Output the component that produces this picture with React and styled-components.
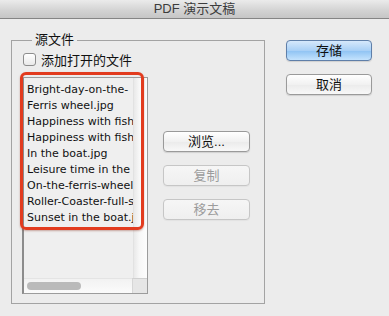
import React from "react";
import styled, { createGlobalStyle } from "styled-components";

const Global = createGlobalStyle`
  html, body { margin: 0; padding: 0; background: #ececec; }
  * { box-sizing: border-box; }
`;

const cjk = `"Liberation Sans", "Noto Sans CJK SC", sans-serif`;

const Window = styled.div`
  width: 389px;
  height: 316px;
  background: #ececec;
  font-family: ${cjk};
  overflow: hidden;
`;

const TitleBar = styled.div`
  height: 19px;
  border-bottom: 1px solid #858585;
  background: linear-gradient(#ebebeb, #d2d2d2 60%, #c6c6c6);
  display: flex;
  align-items: center;
  justify-content: center;
  font-size: 13px;
  color: #3c3c3c;
  line-height: 18px;
`;

const Body = styled.div`
  display: flex;
  padding-left: 11px;
  padding-top: 14px;
`;

const Group = styled.fieldset`
  width: 254px;
  margin: 0;
  border: 1px solid #a3a3a3;
  padding: 4px 0 9px 11px;
  min-width: 0;
`;

const Legend = styled.legend`
  margin-left: 9px;
  padding: 0 3px;
  font-size: 13px;
  line-height: 14px;
  color: #111;
`;

const CheckRow = styled.label`
  display: flex;
  align-items: center;
  height: 16px;
  font-size: 13px;
  color: #111;
  gap: 5px;
`;

const Check = styled.span`
  width: 13px;
  height: 13px;
  border: 1px solid #8d8d8d;
  border-radius: 3px;
  background: linear-gradient(#ffffff, #e9e9e9);
  box-shadow: inset 0 1px 0 #fff;
`;

const ListRow = styled.div`
  display: flex;
  margin-top: 10px;
  margin-left: -1px;
`;

const ListBox = styled.div`
  position: relative;
  width: 126px;
  height: 217px;
  border: 1px solid #9c9c9c;
  border-left: 2px solid #8c8c8c;
  background: #efefef;
  display: flex;
  flex-direction: column;
`;

const ListMain = styled.div`
  flex: 1;
  display: flex;
  min-height: 0;
`;

const Items = styled.div`
  flex: 1;
  overflow: hidden;
  padding: 4px 0 0 3px;
  font-family: "DejaVu Sans", "Liberation Sans", sans-serif;
  font-size: 11px;
  line-height: 16px;
  color: #111;
  white-space: nowrap;
`;

const VTrack = styled.div`
  width: 14px;
  background: linear-gradient(90deg, #e9e9e9, #f7f7f7 40%, #fdfdfd);
  border-left: 1px solid #e2e2e2;
`;

const HBar = styled.div`
  height: 15px;
  display: flex;
`;

const HTrack = styled.div`
  flex: 1;
  background: linear-gradient(#f2f2f2, #fbfbfb);
  border-top: 1px solid #e4e4e4;
  padding: 3px 0 0 3px;
`;

const Thumb = styled.div`
  width: 54px;
  height: 8px;
  border-radius: 4px;
  background: #bababa;
`;

const Corner = styled.div`
  width: 15px;
  background: #e6e6e6;
  border-top: 1px solid #d0d0d0;
  border-left: 1px solid #d6d6d6;
`;

const Highlight = styled.div`
  position: absolute;
  left: -4px;
  top: -6px;
  width: 124px;
  height: 158px;
  border: 3px solid #e23b1e;
  border-radius: 6px;
  box-shadow: 0 1px 2px rgba(120, 30, 10, 0.35);
  pointer-events: none;
`;

const SideButtons = styled.div`
  display: flex;
  flex-direction: column;
  gap: 13px;
  margin-left: 15px;
  margin-top: 54px;
`;

const RightButtons = styled.div`
  display: flex;
  flex-direction: column;
  gap: 13px;
  margin-left: 21px;
  margin-top: 7px;
`;

const Button = styled.button`
  width: ${(p) => p.$w}px;
  height: 21px;
  padding: 0;
  border-radius: 4px;
  font-family: ${cjk};
  font-size: 13px;
  line-height: 19px;
  color: ${(p) => (p.disabled ? "#9c9c9c" : "#111")};
  border: 1px solid ${(p) => (p.$primary ? "#5f7fa9" : p.disabled ? "#c6c6c6" : "#9a9a9a")};
  background: ${(p) =>
    p.$primary
      ? "linear-gradient(#d6e8fb, #a9d0f6 50%, #8fc3f3 52%, #c4e3fd)"
      : p.disabled
      ? "linear-gradient(#f6f6f6, #efefef)"
      : "linear-gradient(#ffffff, #f1f1f1 50%, #ebebeb 52%, #f8f8f8)"};
  box-shadow: 0 1px 1px rgba(0, 0, 0, ${(p) => (p.disabled ? 0.04 : 0.12)});
`;

const files = [
  "Bright-day-on-the-Ferris-wheel.jpg",
  "Ferris wheel.jpg",
  "Happiness with fish 1.jpg",
  "Happiness with fish 2.jpg",
  "In the boat.jpg",
  "Leisure time in the park.jpg",
  "On-the-ferris-wheel.jpg",
  "Roller-Coaster-full-speed.jpg",
  "Sunset in the boat.jpg",
];

export default function App() {
  return (
    <Window>
      <Global />
      <TitleBar>PDF 演示文稿</TitleBar>
      <Body>
        <Group>
          <Legend>源文件</Legend>
          <CheckRow>
            <Check />
            添加打开的文件
          </CheckRow>
          <ListRow>
            <ListBox>
              <ListMain>
                <Items>
                  {files.map((f, i) => (
                    <div key={i}>{i === 0 ? "Bright-day-on-the-" : f}</div>
                  ))}
                </Items>
                <VTrack />
              </ListMain>
              <HBar>
                <HTrack>
                  <Thumb />
                </HTrack>
                <Corner />
              </HBar>
              <Highlight />
            </ListBox>
            <SideButtons>
              <Button $w={87}>浏览...</Button>
              <Button $w={87} disabled>复制</Button>
              <Button $w={87} disabled>移去</Button>
            </SideButtons>
          </ListRow>
        </Group>
        <RightButtons>
          <Button $w={86} $primary>存储</Button>
          <Button $w={86}>取消</Button>
        </RightButtons>
      </Body>
    </Window>
  );
}
